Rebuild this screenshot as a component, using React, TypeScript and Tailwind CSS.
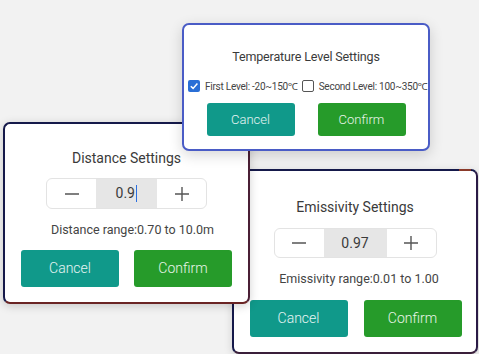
import React from "react";

const font = { fontFamily: "Roboto, 'Noto Sans', Arial, sans-serif" };

function Minus() {
  return (
    <svg width="16" height="16" viewBox="0 0 16 16">
      <line x1="1" y1="8" x2="15" y2="8" stroke="#555" strokeWidth="1.4" />
    </svg>
  );
}
function Plus() {
  return (
    <svg width="16" height="16" viewBox="0 0 16 16">
      <line x1="1" y1="8" x2="15" y2="8" stroke="#555" strokeWidth="1.4" />
      <line x1="8" y1="1" x2="8" y2="15" stroke="#555" strokeWidth="1.4" />
    </svg>
  );
}

function Stepper({ value, cursor, wide }: { value: string; cursor?: boolean; wide?: boolean }) {
  return (
    <div className={`flex ${wide ? "h-[30px]" : "h-[31px]"} rounded-[6px] border border-[#e3e3e3] overflow-hidden bg-white`}>
      <div className="w-[49px] flex items-center justify-center">
        <Minus />
      </div>
      <div className={`${wide ? "w-[63px]" : "w-[61px]"} bg-[#e6e6e6] flex items-center justify-center text-[14px] text-[#3a3a3a]`}>
        <span>{value}</span>
        {cursor && <span className="inline-block w-[1.5px] h-[17px] bg-[#2b6fe0] ml-[1px]" />}
      </div>
      <div className="w-[49px] flex items-center justify-center">
        <Plus />
      </div>
    </div>
  );
}

function Buttons({ h, w, text }: { h: string; w: string; text: string }) {
  return (
    <>
      <div className={`${h} ${w} rounded-[3px] bg-[#10998a] text-white/90 ${text} font-light flex items-center justify-center`}>
        Cancel
      </div>
      <div className={`${h} ${w} rounded-[3px] bg-[#269b2a] text-white/90 ${text} font-light flex items-center justify-center`}>
        Confirm
      </div>
    </>
  );
}

export default function App() {
  return (
    <div className="relative w-[479px] h-[354px] bg-[#f2f2f2] overflow-hidden" style={font}>
      {/* Emissivity panel */}
      <div className="absolute left-[232px] top-[169px] w-[246px] h-[185px] rounded-[7px] border-2 border-[#15194a] border-b-[#3a1f3a] border-r-[#2a1a45] bg-white shadow-[0_2px_8px_rgba(0,0,0,0.15)] flex flex-col items-center pt-[26px]">
        <div className="absolute top-[-2px] left-[225px] w-[12px] h-[2px] bg-[#8a3a2a]" />
        <div className="h-[20px] leading-[20px] text-[14px] text-[#3a3a3a]">Emissivity Settings</div>
        <div className="mt-[11px]">
          <Stepper value="0.97" wide />
        </div>
        <div className="mt-[13px] ml-[8px] h-[16px] leading-[16px] text-[12.5px] text-[#444]">Emissivity range:0.01 to 1.00</div>
        <div className="mt-[13px] flex gap-[16px] pl-[1px]">
          <Buttons h="h-[37px]" w="w-[98px]" text="text-[14px]" />
        </div>
      </div>

      {/* Distance panel */}
      <div className="absolute left-[3px] top-[122px] w-[247px] h-[182px] rounded-[7px] border-2 border-[#15194a] border-b-[#6a2424] border-r-[#4a1f35] bg-white shadow-[0_2px_10px_rgba(0,0,0,0.18)] flex flex-col items-center pt-[24px]">
        <div className="h-[20px] leading-[20px] text-[14px] text-[#3a3a3a]">Distance Settings</div>
        <div className="mt-[10px]">
          <Stepper value="0.9" cursor />
        </div>
        <div className="mt-[13px] ml-[12px] h-[16px] leading-[16px] text-[12.5px] text-[#444]">Distance range:0.70 to 10.0m</div>
        <div className="mt-[12px] flex gap-[15px]">
          <Buttons h="h-[37px]" w="w-[98px]" text="text-[14px]" />
        </div>
      </div>

      {/* Temperature panel */}
      <div className="absolute left-[182px] top-[23px] w-[248px] h-[128px] rounded-[7px] border-2 border-[#4a5cc6] bg-white shadow-[0_4px_14px_rgba(0,0,0,0.16)] flex flex-col pt-[23px] overflow-hidden">
        <div className="absolute top-[-2px] left-[215px] w-[11px] h-[2px] bg-[#f0b040]" />
        <div className="h-[18px] leading-[18px] text-[12.5px] tracking-[-0.15px] text-[#3a3a3a] text-center">Temperature Level Settings</div>
        <div className="mt-[13px] h-[14px] flex items-center pl-[4px] whitespace-nowrap text-[10px] tracking-[-0.25px] text-[#444]">
          <div className="w-[12px] h-[12px] rounded-[2px] bg-[#2a6fd6] flex items-center justify-center shrink-0">
            <svg width="10" height="10" viewBox="0 0 10 10">
              <path d="M1.8 5.2 L4.1 7.4 L8.4 2.6" fill="none" stroke="white" strokeWidth="1.5" />
            </svg>
          </div>
          <span className="ml-[5px]">First Level: -20~150℃</span>
          <div className="ml-[4px] w-[12px] h-[12px] rounded-[2px] border-[1.5px] border-[#555] shrink-0" />
          <span className="ml-[5px]">Second Level: 100~350℃</span>
        </div>
        <div className="mt-[10px] flex gap-[23px] justify-center">
          <Buttons h="h-[33px]" w="w-[88px]" text="text-[13px]" />
        </div>
      </div>
    </div>
  );
}
